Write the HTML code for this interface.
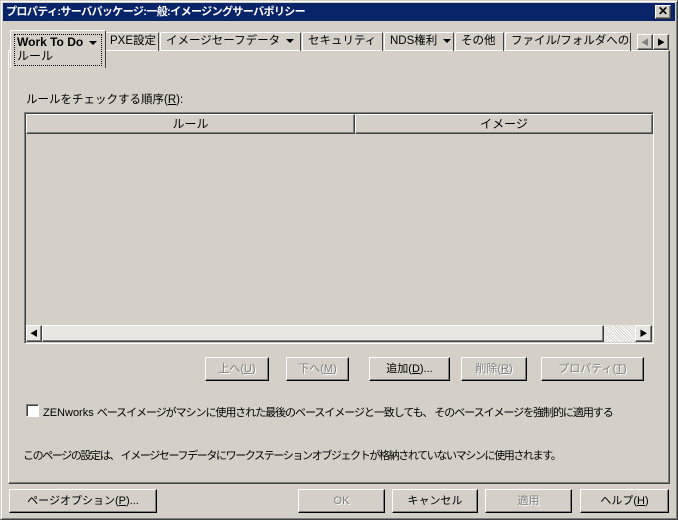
<!DOCTYPE html>
<html><head><meta charset="utf-8"><style>
*{box-sizing:border-box;margin:0;padding:0}
body{width:678px;height:520px;background:#d4d0c8;font-family:"Liberation Sans","Noto Sans CJK JP",sans-serif;font-size:12px;color:#000;position:relative;overflow:hidden}
.a{position:absolute}
.out{border:1px solid;border-color:#fff #404040 #404040 #fff;box-shadow:inset -1px -1px 0 #808080}
.btn{position:absolute;border:1px solid;border-color:#fff #000 #000 #fff;box-shadow:inset -1px -1px 0 #808080;text-align:center;line-height:22px;height:24px;white-space:nowrap;font-size:11px}
.dis{color:#808080;text-shadow:1px 1px 0 #fff}
.tab{position:absolute;top:32px;height:19px;border:1px solid;border-bottom:none;border-color:#fff #404040 #404040 #fff;border-radius:2px 2px 0 0;line-height:17px;padding-left:5px;white-space:nowrap;overflow:hidden;font-size:11.5px}
.tri{display:inline-block;width:0;height:0;border-left:4px solid transparent;border-right:4px solid transparent;border-top:4px solid #000;vertical-align:middle;margin-left:6px}
.nar{font-size:11px;white-space:nowrap}
</style></head><body>
<div class="a" style="left:0;top:0;width:678px;height:520px;border:1px solid;border-color:#d4d0c8 #404040 #404040 #d4d0c8;box-shadow:inset 1px 1px 0 #fff,inset -1px -1px 0 #808080"></div>
<div class="a" style="left:3px;top:3px;width:672px;height:18px;background:#0a246a;color:#fff;font-weight:bold;line-height:18px;padding-left:3px;font-size:11px;letter-spacing:-0.6px">プロパティ:サーバパッケージ:一般:イメージングサーバポリシー</div>
<div class="a out" style="left:655px;top:5px;width:16px;height:14px;background:#d4d0c8;text-align:center;line-height:11px;font-weight:bold;font-size:12px">✕</div>
<div class="a" style="left:8px;top:50px;width:662px;height:434px;border:1px solid;border-color:#fff #404040 #404040 #fff;box-shadow:inset -1px -1px 0 #808080"></div>
<div class="tab" style="left:104px;width:55px">PXE設定</div>
<div class="tab" style="left:160px;width:141px">イメージセーフデータ<span class="tri"></span></div>
<div class="tab" style="left:302px;width:81px">セキュリティ</div>
<div class="tab" style="left:384px;width:70px">NDS権利<span class="tri"></span></div>
<div class="tab" style="left:455px;width:49px">その他</div>
<div class="tab" style="left:505px;width:126px">ファイル/フォルダへの権</div>
<div class="a out" style="left:637px;top:34px;width:16px;height:16px;text-align:center;line-height:15px;font-size:8px;color:#808080">◀</div>
<div class="a out" style="left:653px;top:34px;width:16px;height:16px;text-align:center;line-height:15px;font-size:8px">▶</div>
<div class="a" style="left:10px;top:30px;width:96px;height:38px;background:#d4d0c8;border:1px solid;border-bottom:none;border-color:#fff #404040 #404040 #fff;border-radius:2px 2px 0 0"></div>
<div class="a" style="left:14px;top:34px;width:88px;height:32px;border:1px dotted #000;padding-left:2px;line-height:14px"><b>Work To Do</b><span class="tri"></span><br>ルール</div>
<div class="a" style="left:26px;top:91px;font-size:11.5px">ルールをチェックする順序(<u>R</u>):</div>
<div class="a" style="left:24px;top:112px;width:630px;height:232px;border:1px solid;border-color:#808080 #fff #fff #808080;box-shadow:inset 1px 1px 0 #404040"></div>
<div class="a out" style="left:26px;top:114px;width:329px;height:20px;text-align:center;line-height:18px">ルール</div>
<div class="a out" style="left:355px;top:114px;width:298px;height:20px;text-align:center;line-height:18px">イメージ</div>
<div class="a" style="left:26px;top:325px;width:626px;height:17px;background:#e8e6e0"></div>
<div class="a out" style="left:26px;top:325px;width:16px;height:17px;font-size:8px;text-align:center;line-height:15px">◀</div>
<div class="a out" style="left:42px;top:325px;width:562px;height:17px"></div>
<div class="a" style="left:604px;top:325px;width:31px;height:17px;background:repeating-linear-gradient(45deg,#fff 0 1px,#d4d0c8 1px 2px)"></div>
<div class="a out" style="left:635px;top:325px;width:17px;height:17px;font-size:8px;text-align:center;line-height:15px">▶</div>
<div class="btn dis" style="left:205px;top:357px;width:64px">上へ(<u>U</u>)</div>
<div class="btn dis" style="left:286px;top:357px;width:63px">下へ(<u>M</u>)</div>
<div class="btn" style="left:369px;top:357px;width:81px">追加(<u>D</u>)...</div>
<div class="btn dis" style="left:461px;top:357px;width:66px">削除(<u>R</u>)</div>
<div class="btn dis" style="left:541px;top:357px;width:103px">プロパティ(<u>T</u>)</div>
<div class="a" style="left:26px;top:404px;width:13px;height:13px;background:#fff;border:1px solid;border-color:#808080 #fff #fff #808080;box-shadow:inset 1px 1px 0 #404040"></div>
<div class="a nar" style="left:43px;top:404px;letter-spacing:-1.05px"><span style="letter-spacing:0">ZENworks </span>ベースイメージがマシンに使用された最後のベースイメージと一致しても、 そのベースイメージを強制的に適用する</div>
<div class="a nar" style="left:23px;top:447px;letter-spacing:-1.38px">このページの設定は、 イメージセーフデータにワークステーションオブジェクトが格納されていないマシンに使用されます。</div>
<div class="btn" style="left:9px;top:489px;width:148px">ページオプション(<u>P</u>)...</div>
<div class="btn dis" style="left:298px;top:489px;width:87px">OK</div>
<div class="btn" style="left:392px;top:489px;width:86px">キャンセル</div>
<div class="btn dis" style="left:485px;top:489px;width:87px">適用</div>
<div class="btn" style="left:580px;top:489px;width:89px">ヘルプ(<u>H</u>)</div>
</body></html>
